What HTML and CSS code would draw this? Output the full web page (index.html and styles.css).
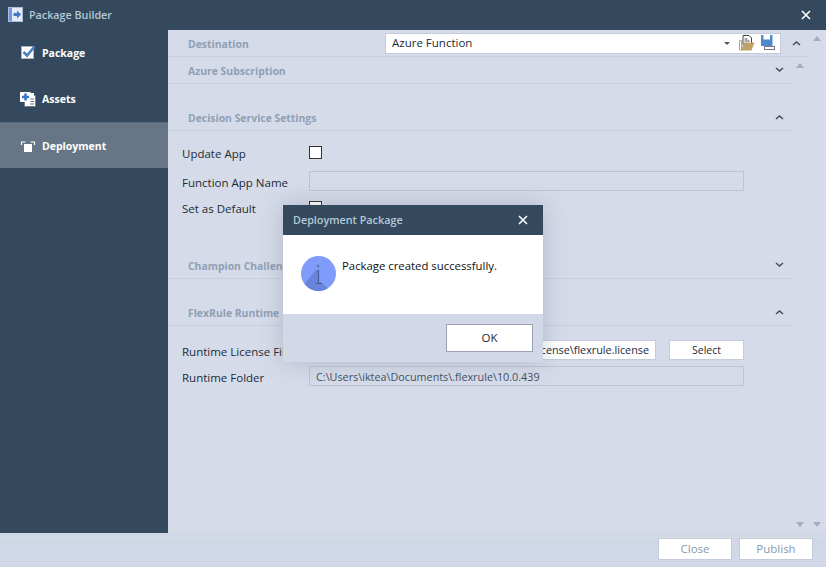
FILE: index.html
```html
<!DOCTYPE html>
<html lang="en">
<head>
  <meta charset="UTF-8">
  <title>Package Builder</title>
  <link rel="stylesheet" href="styles.css">
</head>
<body>
  <div class="window">
    <div class="titlebar">
      <svg class="app-icon" width="15" height="15" viewBox="0 0 15 15">
        <rect x="0.5" y="0.5" width="14" height="14" fill="#e4ebf7" stroke="#a9bde0"/>
        <rect x="1" y="1" width="3" height="13" fill="#6f9ae0"/>
        <path d="M5.500 6h3.500V3.500l4 4-4 4V9H5.500z" fill="#3f78c8"/>
      </svg>
      <span class="title">Package Builder</span>
      <svg width="10" height="10" viewBox="0 0 10 10">
        <path d="M1 1l8 8M9 1l-8 8" stroke="#fff" stroke-width="1.600"/>
      </svg>
    </div>

    <div class="middle">
      <div class="sidebar">
        <div class="nav-item">
          <svg width="16" height="16" viewBox="0 0 16 16">
            <rect x="1.500" y="1.500" width="12" height="12" fill="#fff" stroke="#aab4c0"/>
            <path d="M3.500 7l3.500 3.500L14.500 1.500" fill="none" stroke="#4a7fc1" stroke-width="2.600"/>
          </svg>
          <span>Package</span>
        </div>
        <div class="nav-item">
          <svg width="16" height="16" viewBox="0 0 16 16">
            <rect x="4.500" y="4.500" width="11" height="11" fill="#fff" stroke="#6d7c8c"/>
            <path d="M10 8h4M10 10.500h4M10 13h4" stroke="#66788c"/>
            <rect x="0" y="1" width="10.500" height="10" fill="#fff"/>
            <path d="M5.500 2.500v7M2 6h7" stroke="#3f78c0" stroke-width="2.600"/>
            <rect x="10" y="2" width="4" height="3" fill="#fff"/>
          </svg>
          <span>Assets</span>
        </div>
        <div class="nav-item active">
          <svg width="16" height="16" viewBox="0 0 16 16">
            <path d="M1.500 7V4h4M10.500 4h4v3" fill="none" stroke="#fff" stroke-width="1.200"/>
            <rect x="4" y="6" width="8" height="8" fill="#fff"/>
          </svg>
          <span>Deployment</span>
        </div>
      </div>

      <div class="content">
        <div class="panel">
          <div class="section-head destination">
            <span class="section-title">Destination</span>
            <div class="combo">
              <span class="combo-text">Azure Function</span>
              <span class="combo-arrow"></span>
              <svg class="folder-icon" width="16" height="16" viewBox="0 0 16 16">
                <path d="M.5 5.500h2V15H.5z" fill="none" stroke="#bfa26a"/>
                <path d="M4 .5h6l2.500 2.500v7H4z" fill="#fff" stroke="#444"/>
                <path d="M5.500 4h3M5.500 6h5" stroke="#555"/>
                <path d="M5 7.500h10.500L12.500 15.500H2z" fill="#bfa26a"/>
              </svg>
              <svg width="14" height="16" viewBox="0 0 14 16">
                <path d="M0 0h11.500v11H0z" fill="#4f8ac9"/>
                <rect x="2.500" y="0" width="6.500" height="4.500" fill="#fff"/>
                <rect x="3.500" y="11.500" width="10" height="3" fill="#fff" stroke="#778"/>
              </svg>
            </div>
            <svg class="combo-chevron" width="9" height="6" viewBox="0 0 9 6"><path d="M1 5l3.500-3L8 5" fill="none" stroke="#444b57" stroke-width="1.500"/></svg>
          </div>

          <div class="inner-row">
            <div class="panel-inner">
              <div class="section-head">
                <span class="section-title">Azure Subscription</span>
                <svg width="9" height="6" viewBox="0 0 9 6"><path d="M1 1l3.500 3L8 1" fill="none" stroke="#444b57" stroke-width="1.500"/></svg>
              </div>

              <div class="section-head spaced">
                <span class="section-title">Decision Service Settings</span>
                <svg width="9" height="6" viewBox="0 0 9 6"><path d="M1 5l3.500-3L8 5" fill="none" stroke="#444b57" stroke-width="1.500"/></svg>
              </div>
              <div class="form settings">
                <div class="form-row">
                  <span class="label">Update App</span>
                  <span class="checkbox"></span>
                </div>
                <div class="form-row">
                  <span class="label">Function App Name</span>
                  <span class="field"></span>
                </div>
                <div class="form-row">
                  <span class="label">Set as Default</span>
                  <span class="checkbox"></span>
                </div>
              </div>

              <div class="section-head spaced">
                <span class="section-title">Champion Challenger</span>
                <svg width="9" height="6" viewBox="0 0 9 6"><path d="M1 1l3.500 3L8 1" fill="none" stroke="#444b57" stroke-width="1.500"/></svg>
              </div>

              <div class="section-head spaced">
                <span class="section-title">FlexRule Runtime</span>
                <svg width="9" height="6" viewBox="0 0 9 6"><path d="M1 5l3.500-3L8 5" fill="none" stroke="#444b57" stroke-width="1.500"/></svg>
              </div>
              <div class="form runtime">
                <div class="form-row">
                  <span class="label">Runtime License File</span>
                  <span class="path-box">C:\Users\iktea\Documents\.flexrule\license\flexrule.license</span>
                  <span class="select-btn">Select</span>
                </div>
                <div class="form-row">
                  <span class="label">Runtime Folder</span>
                  <span class="field">C:\Users\iktea\Documents\.flexrule\10.0.439</span>
                </div>
              </div>
            </div>
            <div class="scroll-inner">
              <span class="tri-up"></span>
              <span class="tri-down"></span>
            </div>
          </div>
        </div>

        <div class="scroll-outer">
          <span class="tri-up"></span>
          <span class="tri-down"></span>
        </div>
      </div>
    </div>

    <div class="footer">
      <div class="foot-row">
        <span class="foot-btn">Close</span>
        <span class="foot-btn">Publish</span>
      </div>
    </div>

    <div class="dialog">
      <div class="dialog-head">
        <span class="dialog-title">Deployment Package</span>
        <svg width="10" height="10" viewBox="0 0 10 10">
          <path d="M1 1l8 8M9 1l-8 8" stroke="#fff" stroke-width="1.600"/>
        </svg>
      </div>
      <div class="dialog-body">
        <svg width="35" height="35" viewBox="0 0 35 35">
          <circle cx="17.500" cy="17.500" r="17.500" fill="#7f9cfb"/>
          <path d="M3.500 28L15 14h3v12h2l7 6.200A17.500 17.500 0 0 1 3.500 28z" fill="#6a84dc"/>
          <circle cx="17" cy="10" r="1.300" fill="#5a6fb4"/>
          <path d="M17.500 14v13M14 27.500h7" fill="none" stroke="#4a5c9c" stroke-width="1.200"/>
        </svg>
        <span class="dialog-msg">Package created successfully.</span>
      </div>
      <div class="dialog-foot">
        <span class="ok-btn">OK</span>
      </div>
    </div>
  </div>
</body>
</html>
```

FILE: styles.css
```css
html, body {
  margin: 0;
  padding: 0;
}
body {
  font-family: "Open Sans", "Noto Sans", sans-serif;
  font-size: 11.5px;
  color: #222b38;
}
.window {
  position: relative;
  width: 826px;
  height: 567px;
  overflow: hidden;
  display: flex;
  flex-direction: column;
  background-color: #d5dbe9;
}
.titlebar {
  height: 30px;
  flex: none;
  display: flex;
  align-items: center;
  background-color: #34495e;
  padding: 0 15px 0 8px;
  box-sizing: border-box;
}
.app-icon {
  margin: 0 6px 1px 0;
}
.title {
  flex: 1;
  color: #b4c9d6;
  font-size: 10.750px;
  font-weight: 600;
}
.middle {
  flex: 1;
  display: flex;
  min-height: 0;
}
.sidebar {
  width: 168px;
  flex: none;
  background-color: #34495e;
}
.nav-item {
  height: 46px;
  display: flex;
  align-items: center;
  gap: 6px;
  padding-left: 20px;
  color: #fff;
  font-size: 10.500px;
  font-weight: 700;
}
.nav-item.active {
  background-color: #677686;
  border-top: 1px solid #5a6b7d;
  box-sizing: border-box;
}
.content {
  flex: 1;
  display: flex;
  min-width: 0;
}
.panel {
  width: 642px;
  flex: none;
  display: flex;
  flex-direction: column;
}
.inner-row {
  flex: 1;
  display: flex;
}
.panel-inner {
  width: 624px;
  flex: none;
}
.section-head {
  height: 27px;
  display: flex;
  align-items: center;
  justify-content: space-between;
  box-sizing: border-box;
  padding: 0 8px 0 20px;
  border-bottom: 1px solid #c7d0de;
}
.section-head.spaced {
  height: 47px;
  padding-top: 20px;
}
.section-title {
  color: #8f9fb5;
  font-size: 10.400px;
  font-weight: 700;
  white-space: nowrap;
  padding-top: 2px;
}
.destination {
  width: 640px;
  padding-right: 7px;
}
.combo {
  width: 396px;
  height: 21px;
  margin-left: auto;
  display: flex;
  align-items: center;
  box-sizing: border-box;
  padding: 0 5px 0 6px;
  background-color: #fff;
  border: 1px solid #c3ccda;
}
.combo-chevron {
  margin-left: 11px;
}
.combo-text {
  flex: 1;
  padding-bottom: 2px;
}
.combo-arrow {
  width: 0;
  height: 0;
  border-left: 3px solid transparent;
  border-right: 3px solid transparent;
  border-top: 3px solid #555;
  margin-right: 9px;
}
.folder-icon {
  margin-right: 6px;
}
.form {
  padding-left: 14px;
}
.settings {
  height: 101px;
  box-sizing: border-box;
  padding-top: 8px;
  display: grid;
  grid-template-rows: 27px 30px 23px;
}
.settings .form-row {
  height: auto;
}
.settings .label {
  padding-top: 2px;
}
.runtime {
  padding-top: 11px;
}
.runtime .form-row {
  height: 26px;
}
.form-row {
  display: flex;
  align-items: center;
}
.label {
  width: 127px;
  flex: none;
  padding-top: 3px;
  white-space: nowrap;
  overflow: hidden;
}
.checkbox {
  width: 11px;
  height: 11px;
  background-color: #fff;
  border: 1px solid #333;
}
.field {
  width: 435px;
  height: 20px;
  line-height: 19px;
  box-sizing: border-box;
  padding-left: 6px;
  border: 1px solid #bcc5d2;
  background-color: #d5dbe9;
  color: #44505f;
  font-size: 10.800px;
}
.path-box {
  width: 347px;
  height: 20px;
  line-height: 18px;
  box-sizing: border-box;
  padding-right: 6px;
  text-align: right;
  overflow: hidden;
  white-space: nowrap;
  background-color: #fff;
  border: 1px solid #c3ccda;
  font-size: 10.800px;
}
.select-btn {
  width: 75px;
  height: 20px;
  line-height: 18px;
  margin-left: 13px;
  box-sizing: border-box;
  text-align: center;
  background-color: #fff;
  border: 1px solid #c3ccda;
  font-size: 10.500px;
}
.scroll-inner {
  position: relative;
  width: 18px;
  flex: none;
}
.scroll-outer {
  position: relative;
  width: 16px;
  flex: none;
}
.tri-up, .tri-down {
  position: absolute;
  width: 0;
  height: 0;
  border-left: 4px solid transparent;
  border-right: 4px solid transparent;
}
.scroll-inner .tri-up, .scroll-inner .tri-down {
  left: 4px;
}
.scroll-outer .tri-up, .scroll-outer .tri-down {
  left: 3px;
}
.tri-up {
  top: 6px;
  border-bottom: 5px solid #a6adbb;
}
.tri-down {
  border-top: 5px solid #a6adbb;
  bottom: 6px;
}
.footer {
  height: 34px;
  flex: none;
  padding: 4px 0 0 0;
  box-sizing: border-box;
  background-color: #d0d7e6;
}
.foot-row {
  display: flex;
  justify-content: flex-end;
  gap: 7px;
  padding-right: 13px;
  border-top: 1px solid #d8dde2;
}
.foot-btn {
  height: 22px;
  line-height: 20px;
  width: 74px;
  text-align: center;
  box-sizing: border-box;
  background-color: #fff;
  border: 1px solid #c3ccda;
  color: #8b98ac;
  font-size: 11.500px;
}
.dialog {
  position: absolute;
  left: 283px;
  top: 205px;
  width: 260px;
  height: 157px;
  display: flex;
  flex-direction: column;
  background-color: #d2d8e7;
  box-shadow: 0 0 22px rgba(70, 80, 100, 0.25);
}
.dialog-head {
  height: 30px;
  flex: none;
  display: flex;
  align-items: center;
  justify-content: space-between;
  padding: 0 15px 0 10px;
  background-color: #34495e;
}
.dialog-title {
  color: #b4c9d6;
  font-size: 10.800px;
  font-weight: 600;
  padding-bottom: 2px;
}
.dialog-body {
  height: 79px;
  flex: none;
  display: flex;
  align-items: flex-start;
  gap: 6px;
  box-sizing: border-box;
  padding: 21px 0 0 18px;
  background-color: #fff;
  color: #111;
}
.dialog-msg {
  margin-top: 2px;
  font-size: 11.350px;
}
.dialog-foot {
  flex: 1;
  display: flex;
  justify-content: flex-end;
  padding: 10px 10px 0 0;
}
.ok-btn {
  width: 87px;
  height: 28px;
  line-height: 26px;
  text-align: center;
  box-sizing: border-box;
  background-color: #fff;
  border: 1px solid #9aa3af;
}
```
